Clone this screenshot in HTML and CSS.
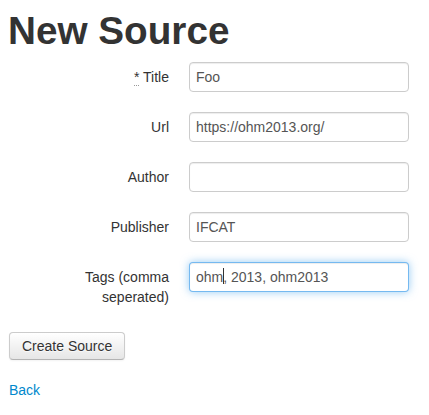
FILE: index.html
```html
<!DOCTYPE html>
<html>
<head>
<meta charset="utf-8">
<title>New Source</title>
<link rel="stylesheet" href="styles.css">
</head>
<body>
<div class="container">
  <h1 class="page-title">New Source</h1>
  <form class="form-horizontal">
    <div class="control-group">
      <label class="control-label" for="title"><abbr title="required">*</abbr> Title</label>
      <div class="controls"><input id="title" class="text-input" type="text" value="Foo"></div>
    </div>
    <div class="control-group">
      <label class="control-label" for="url">Url</label>
      <div class="controls"><input id="url" class="text-input" type="text" value="https://ohm2013.org/"></div>
    </div>
    <div class="control-group">
      <label class="control-label" for="author">Author</label>
      <div class="controls"><input id="author" class="text-input" type="text" value=""></div>
    </div>
    <div class="control-group">
      <label class="control-label" for="publisher">Publisher</label>
      <div class="controls"><input id="publisher" class="text-input" type="text" value="IFCAT"></div>
    </div>
    <div class="control-group">
      <label class="control-label" for="tags">Tags (comma seperated)</label>
      <div class="controls">
        <div class="input-wrap">
          <input id="tags" class="text-input is-focused" type="text" value="ohm, 2013, ohm2013">
          <span class="caret-mark"></span>
        </div>
      </div>
    </div>
    <div class="actions">
      <button type="button" class="btn">Create Source</button>
    </div>
  </form>
  <a class="back-link" href="#">Back</a>
</div>
</body>
</html>
```

FILE: styles.css
```css
html, body {
  margin: 0;
  padding: 0;
  background: #fff;
}

body {
  font-family: "Liberation Sans", Arial, Helvetica, sans-serif;
  font-size: 14px;
  line-height: 20px;
  color: #333;
}

.container {
  padding: 0 9px;
}

.page-title {
  margin: 11px 0 11px -1px;
  font-size: 38.7px;
  line-height: 40px;
  font-weight: bold;
  color: #333;
}

.form-horizontal {
  margin: 0 0 20px;
}

.control-group {
  display: flex;
  align-items: flex-start;
  margin-bottom: 20px;
}

.control-label {
  box-sizing: border-box;
  width: 160px;
  padding: 5px 0 0 12px;
  text-align: right;
  flex: none;
}

.control-label abbr {
  text-decoration: none;
  border-bottom: 1px dotted #999;
  cursor: help;
}

.controls {
  margin-left: 20px;
}

.input-wrap {
  position: relative;
}

.text-input {
  display: block;
  box-sizing: content-box;
  width: 206px;
  height: 20px;
  padding: 4px 6px;
  margin: 0;
  font-family: "Liberation Sans", Arial, Helvetica, sans-serif;
  font-size: 14px;
  line-height: 20px;
  color: #555;
  background: #fff;
  border: 1px solid #ccc;
  border-radius: 4px;
  box-shadow: inset 0 1px 1px rgba(0, 0, 0, 0.075);
  outline: none;
}

.text-input.is-focused {
  border-color: rgba(82, 168, 236, 0.8);
  box-shadow: inset 0 1px 1px rgba(0, 0, 0, 0.075), 0 0 8px rgba(82, 168, 236, 0.6);
}

.caret-mark {
  position: absolute;
  left: 34px;
  top: 6px;
  width: 1px;
  height: 16px;
  background: #333;
}

.actions {
  padding-top: 5px;
}

.btn {
  display: inline-block;
  box-sizing: border-box;
  height: 28px;
  padding: 3px 12px;
  margin: 0;
  font-family: "Liberation Sans", Arial, Helvetica, sans-serif;
  font-size: 14px;
  line-height: 20px;
  color: #333;
  text-shadow: 0 1px 1px rgba(255, 255, 255, 0.75);
  background-color: #f5f5f5;
  background-image: linear-gradient(to bottom, #ffffff, #e6e6e6);
  border: 1px solid #ccc;
  border-bottom-color: #b3b3b3;
  border-radius: 4px;
  box-shadow: inset 0 1px 0 rgba(255, 255, 255, 0.2), 0 1px 2px rgba(0, 0, 0, 0.05);
  cursor: pointer;
  vertical-align: top;
}

.back-link {
  color: #0088cc;
  text-decoration: none;
}
```
